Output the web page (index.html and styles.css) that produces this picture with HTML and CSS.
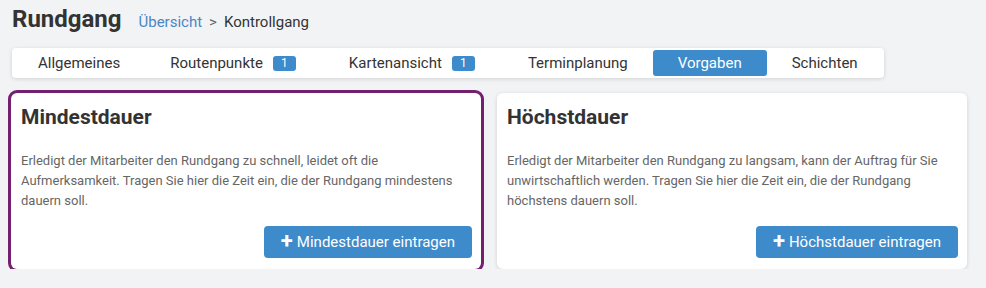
FILE: index.html
```html
<!DOCTYPE html>
<html lang="de">
<head>
    <meta charset="UTF-8">
    <meta name="viewport" content="width=device-width, initial-scale=1.0">
    <title>Rundgang - Vorgaben</title>
    <link rel="stylesheet" href="styles.css">
</head>
<body>
    <div class="page-head">
        <h1 class="page-title">Rundgang</h1>
        <nav class="breadcrumb">
            <a href="#">Übersicht</a>
            <span class="crumb-sep">&gt;</span>
            <span>Kontrollgang</span>
        </nav>
    </div>

    <div class="tabs">
        <div class="tab">Allgemeines</div>
        <div class="tab">Routenpunkte <span class="badge">1</span></div>
        <div class="tab">Kartenansicht <span class="badge">1</span></div>
        <div class="tab">Terminplanung</div>
        <div class="tab active">Vorgaben</div>
        <div class="tab">Schichten</div>
    </div>

    <div class="cards">
        <div class="card selected">
            <h2 class="card-title">Mindestdauer</h2>
            <p class="card-text">Erledigt der Mitarbeiter den Rundgang zu schnell, leidet oft die Aufmerksamkeit. Tragen Sie hier die Zeit ein, die der Rundgang mindestens dauern soll.</p>
            <div class="card-actions">
                <button class="btn"><span class="plus">+</span>Mindestdauer eintragen</button>
            </div>
        </div>

        <div class="card">
            <h2 class="card-title">Höchstdauer</h2>
            <p class="card-text">Erledigt der Mitarbeiter den Rundgang zu langsam, kann der Auftrag für Sie unwirtschaftlich werden. Tragen Sie hier die Zeit ein, die der Rundgang höchstens dauern soll.</p>
            <div class="card-actions">
                <button class="btn"><span class="plus">+</span>Höchstdauer eintragen</button>
            </div>
        </div>
    </div>
</body>
</html>
```

FILE: styles.css
```css
:root {
    --primary-color: #3d8bcb;
    --text-color: #333;
    --muted-color: #666;
    --bg-color: #f2f3f5;
    --selected-color: #74206f;
    --shadow: 0 1px 4px rgba(0, 0, 0, 0.14);
}

body {
    font-family: Roboto, 'Liberation Sans', Arial, sans-serif;
    margin: 0;
    padding: 4px 19px 0 11px;
    background: var(--bg-color);
    color: var(--text-color);
}

.page-head {
    display: flex;
    align-items: baseline;
    gap: 17px;
    padding-left: 1px;
}

.page-title {
    font-size: 24px;
    font-weight: 700;
    margin: 0;
    line-height: 30px;
}

.breadcrumb {
    font-size: 15px;
    display: flex;
    gap: 7px;
}

.breadcrumb a {
    color: #4a86c5;
    text-decoration: none;
}

.crumb-sep {
    color: #666;
}

.tabs {
    display: inline-flex;
    margin: 14px 0 0 1px;
    padding: 2px 1px;
    background: white;
    border-radius: 4px;
    box-shadow: var(--shadow);
}

.tab {
    display: flex;
    align-items: center;
    gap: 10px;
    height: 26px;
    padding: 0 25px;
    font-size: 15px;
    color: var(--text-color);
    border-radius: 3px;
    cursor: pointer;
}

.tab.active {
    background: var(--primary-color);
    color: white;
}

.badge {
    display: inline-flex;
    align-items: center;
    justify-content: center;
    width: 23px;
    height: 15px;
    margin-right: 3px;
    border-radius: 3px;
    background: var(--primary-color);
    color: white;
    font-size: 12px;
}

.cards {
    display: grid;
    grid-template-columns: 1fr 1fr;
    gap: 16px;
    margin-top: 15px;
}

.card {
    background: white;
    border-radius: 6px;
    box-shadow: var(--shadow);
    padding: 12px 9px 11px 10px;
    display: flex;
    flex-direction: column;
    height: 176px;
    box-sizing: border-box;
}

.card.selected {
    box-shadow: 0 0 0 3px var(--selected-color);
}

.card-title {
    font-size: 21px;
    font-weight: 700;
    margin: 0 0 22px;
    line-height: 24px;
}

.card-text {
    font-size: 13px;
    line-height: 20px;
    color: var(--muted-color);
    margin: 0;
}

.card-actions {
    margin-top: auto;
    display: flex;
    justify-content: flex-end;
}

.btn {
    display: inline-flex;
    align-items: center;
    font-family: inherit;
    font-size: 15px;
    height: 32px;
    padding: 0 17px;
    border: none;
    border-radius: 4px;
    background: var(--primary-color);
    color: white;
    cursor: pointer;
}

.plus {
    font-weight: 700;
    font-size: 22px;
    margin: -2px 4px 0 0;
    line-height: 1;
}
```
